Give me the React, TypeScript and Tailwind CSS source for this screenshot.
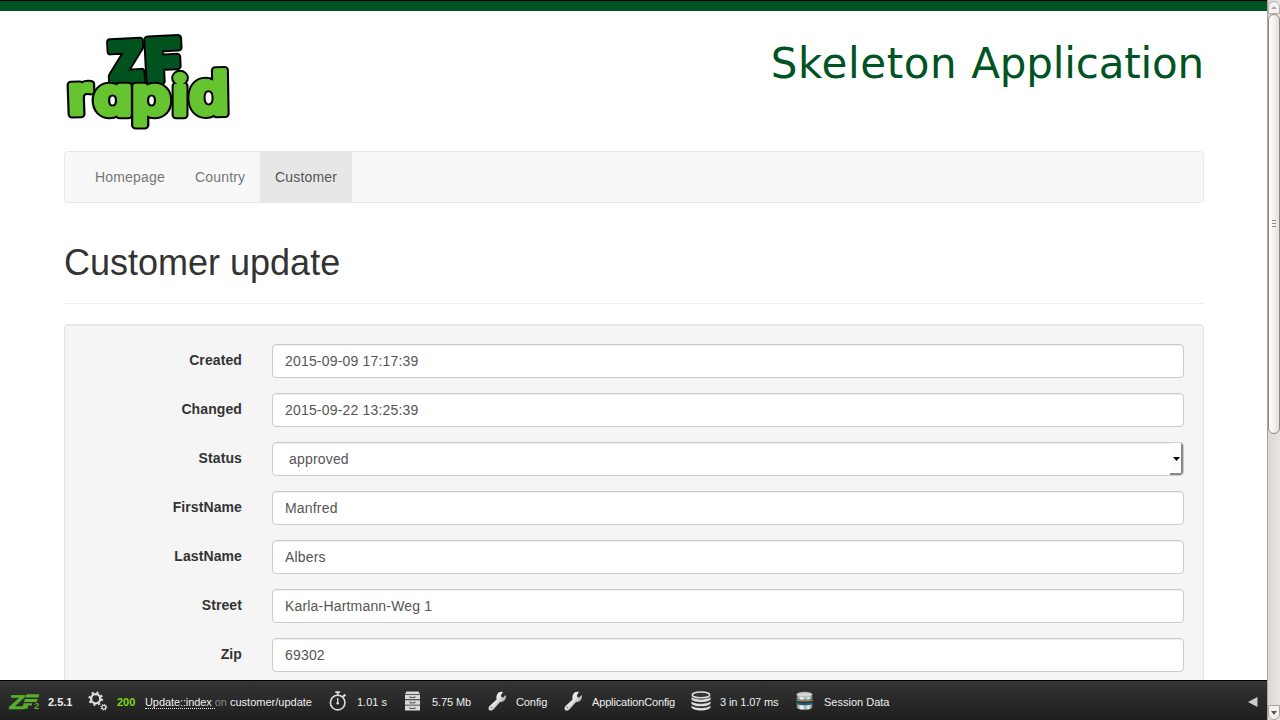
import type { ReactNode } from "react";

type LetterProps = { ch: string; x: number; y: number; size: number; sx: number; rot?: number; fill: string };

function Letters({ items }: { items: LetterProps[] }) {
  const draw = (l: LetterProps, stroke: string, width: number, key: string) => (
    <text
      key={key}
      transform={`translate(${l.x} ${l.y}) rotate(${l.rot ?? 0}) scale(${l.sx} 1)`}
      fontSize={l.size}
      fill={l.fill}
      stroke={stroke}
      strokeWidth={width}
      strokeLinejoin="round"
    >
      {l.ch}
    </text>
  );
  return (
    <>
      {items.map((l) => (
        <g key={l.ch}>
          {draw(l, "#000", 8.4, "outline")}
          {draw(l, l.fill, 4.4, "body")}
        </g>
      ))}
    </>
  );
}

function Logo() {
  const dark = "#00521f";
  const light = "#66c430";
  return (
    <svg
      width="170"
      height="100"
      viewBox="64 31 170 100"
      className="block overflow-visible font-['Inter',sans-serif] [font-feature-settings:'cv11']"
    >
      <g className="font-black">
        <Letters
          items={[
            { ch: "Z", x: 109.5, y: 82.5, size: 55, sx: 0.92, rot: -3, fill: dark },
            { ch: "F", x: 147, y: 82, size: 58, sx: 1.02, rot: -3, fill: dark },
          ]}
        />
      </g>
      <g className="font-bold">
        <Letters
          items={[
            { ch: "r", x: 68.5, y: 114.5, size: 54, sx: 1.1, rot: -2, fill: light },
            { ch: "a", x: 94, y: 114.5, size: 53, sx: 1.14, fill: light },
            { ch: "p", x: 132, y: 114.5, size: 53, sx: 1.14, fill: light },
            { ch: "i", x: 172.5, y: 114.5, size: 53, sx: 1.05, fill: light },
            { ch: "d", x: 189.5, y: 114.500, size: 60, sx: 1.05, rot: -1, fill: light },
          ]}
        />
      </g>
    </svg>
  );
}

const fields = [
  ["Created", "2015-09-09 17:17:39"],
  ["Changed", "2015-09-22 13:25:39"],
  ["Status", "approved"],
  ["FirstName", "Manfred"],
  ["LastName", "Albers"],
  ["Street", "Karla-Hartmann-Weg 1"],
  ["Zip", "69302"],
];

function Field({ label, value }: { label: string; value: string }) {
  const select = label === "Status";
  return (
    <div className="flex h-[34px] shrink-0">
      <div className="w-[158px] pt-[6px] text-right font-bold leading-5 tracking-[0.1px] text-[#333]">{label}</div>
      <div className="ml-[30px] flex flex-1 items-center justify-between overflow-hidden rounded-[4px] border border-[#ccc] bg-white pl-3 tracking-[0.18px] text-[#555] shadow-[inset_0_1px_1px_rgba(0,0,0,0.075)]">
        <span className={select ? "pl-1" : ""}>{value}</span>
        {select && (
          <span className="flex h-[32px] w-[13px] items-center justify-center rounded-br-[3px] border-b-2 border-r-2 border-[#888] bg-[#fcfcfa] pl-px pt-px">
            <svg width="7" height="4" viewBox="0 0 7 4"><path d="M0 0h7L3.5 4z" fill="#000" /></svg>
          </span>
        )}
      </div>
    </div>
  );
}

function ZfMark() {
  return (
    <svg width="33" height="18" viewBox="0 0 33 18" className="overflow-visible font-['Liberation_Sans',sans-serif] font-bold">
      <text transform="translate(0.6 16.6) skewX(-6) scale(1.3 1)" fontSize="20" fill="#59ae2c" stroke="#59ae2c" strokeWidth="0.6">Z</text>
      <path d="M18.500 2.300h12.800l-.8 3.300H17.200zM17 6.900h12.600l-.8 3.200H15.900zM15.600 11.300h8.700l-.6 2.200h-3.500l-.8 3.200h-5.200z" fill="#59ae2c" />
      <text x="26" y="17.200" fontSize="9.500" fill="#59ae2c">2</text>
    </svg>
  );
}

function Gears() {
  return (
    <svg width="20" height="20" viewBox="0 0 20 20" fill="none" stroke="#ddd">
      <circle cx="7.7" cy="7.8" r="4.6" strokeWidth="2.3" />
      <circle cx="7.7" cy="7.8" r="6.3" strokeWidth="2" strokeDasharray="2.2 2.748" />
      <circle cx="15.8" cy="16.2" r="1.9" strokeWidth="1.2" />
      <circle cx="15.8" cy="16.2" r="2.9" strokeWidth="1.1" strokeDasharray="1.1 1.177" />
    </svg>
  );
}

function Stopwatch() {
  return (
    <svg width="18" height="20" viewBox="0 0 18 20" fill="none" stroke="#ddd">
      <circle cx="8.7" cy="11.6" r="7.3" strokeWidth="1.6" />
      <path d="M6.3 1.2h4.8M8.7 1.5v3" strokeWidth="1.8" />
      <path d="M14 5.6l2.5-2" strokeWidth="2" />
      <path d="M8.7 7v5" strokeWidth="1.3" />
      <circle cx="8.7" cy="12.2" r="1.3" fill="#ddd" stroke="none" />
    </svg>
  );
}

function Cabinet() {
  return (
    <svg width="17" height="20" viewBox="0 0 17 20">
      <path d="M2.5.5h12L16 3H1zM1 3.8h15v4.5H1zM1 9.2h15v4.5H1zM1 14.6h15v4.9H1z" fill="#d9d9d9" />
      <path d="M6 5.200v1.300h5V5.200M6 10.600v1.300h5v-1.300M6 16.200v1.300h5v-1.300" fill="none" stroke="#444" strokeWidth="0.9" />
    </svg>
  );
}

function Wrench() {
  return (
    <svg width="19" height="20" viewBox="0 0 19 20">
      <defs>
        <linearGradient id="steel" x1="0" y1="0" x2="1" y2="1">
          <stop offset="0" stopColor="#fff" />
          <stop offset="0.5" stopColor="#e3e3e3" />
          <stop offset="0.75" stopColor="#999" />
        </linearGradient>
      </defs>
      <path
        d="M11 1.300C12.300.6 13.800.6 15 1.100L12.900 4.300l.5 1.900 1.900.4 2.300-2.700c.7 2.300.1 4.600-1.500 5.900-1.300 1.100-2.700 1.400-4 1.100l-6.700 7.700c-1.200 1.300-3 1.500-4.200.400-1.100-1.200-.8-3 .4-4.100l7-6.400C7.900 5.700 9 2.700 11 1.300z"
        fill="url(#steel)"
      />
      <circle cx="3.300" cy="16.500" r=".9" fill="#888" />
    </svg>
  );
}

function Database() {
  return (
    <svg width="20" height="20" viewBox="0 0 20 20">
      <ellipse cx="10" cy="3.9" rx="8.7" ry="2.9" fill="#333" stroke="#ddd" strokeWidth="1.6" />
      <path
        d="M.5 6c2 3.300 17 3.300 19 0v2.600c-2 3.400-17 3.400-19 0zM.5 10.300c2 3.300 17 3.300 19 0v2.400c-2 3.400-17 3.400-19 0zM.5 14.400c2 3.300 17 3.300 19 0v2.200c-2 4-17 4-19 0z"
        fill="#ddd"
      />
    </svg>
  );
}

function Session() {
  return (
    <svg width="17" height="20" viewBox="0 0 17 20">
      <defs>
        <linearGradient id="drum" x1="0" x2="1" y1="0" y2="0">
          <stop offset="0" stopColor="#777" />
          <stop offset=".3" stopColor="#fff" />
          <stop offset=".55" stopColor="#aaa" />
          <stop offset=".75" stopColor="#eee" />
          <stop offset="1" stopColor="#777" />
        </linearGradient>
      </defs>
      <path d="M.7 3.500v13c1 3 14.600 3 15.600 0v-13z" fill="url(#drum)" />
      <ellipse cx="8.500" cy="3.500" rx="7.800" ry="2.400" fill="#d4d4d4" stroke="#999" strokeWidth=".5" />
      <path d="M.5 7.200c3 2 13 2 16 0v5.600c-3 2-13 2-16 0z" fill="#17657d" />
      <path d="M.5 8.800c3 1.600 13 1.600 16 0" fill="none" stroke="#c98a3c" strokeWidth="1.100" />
      <path d="M.5 10.300c3 1.600 13 1.600 16 0" fill="none" stroke="#333" strokeWidth="1.300" />
    </svg>
  );
}

function Tool({ icon, width, gap, children }: { icon: ReactNode; width: string; gap: string; children: ReactNode }) {
  return (
    <div className={`flex h-full shrink-0 items-center whitespace-nowrap ${width}`}>
      <span className={`shrink-0 ${gap}`}>{icon}</span>
      <span className="pt-[3px]">{children}</span>
    </div>
  );
}

function DebugBar() {
  return (
    <div className="flex h-10 shrink-0 items-center border-t border-black bg-linear-to-b from-[#343434] to-[#1f1f1f] pl-2 font-['Liberation_Sans',Arial,sans-serif] text-[11px] leading-[14px] text-[#eee]">
      <Tool icon={<ZfMark />} width="w-[80px]" gap="w-[40px]"><b>2.5.1</b></Tool>
      <Tool icon={<Gears />} width="w-[241px]" gap="w-[29px]">
        <b className="inline-block w-[28px] text-[#7fdb12]">200</b>
        <span className="border-b border-dotted border-[#eee] tracking-[-0.09px]">Update::index </span>
        <span className="text-[#888]">on</span> customer/update
      </Tool>
      <Tool icon={<Stopwatch />} width="w-[75px]" gap="w-[28px]">1.01 s</Tool>
      <Tool icon={<Cabinet />} width="w-[84px]" gap="w-[28px]"><span className="tracking-[-0.1px]">5.75 Mb</span></Tool>
      <Tool icon={<Wrench />} width="w-[76px]" gap="w-[28px]"><span className="tracking-[-0.1px]">Config</span></Tool>
      <Tool icon={<Wrench />} width="w-[127px]" gap="w-[28px]"><span className="tracking-[-0.15px]">ApplicationConfig</span></Tool>
      <Tool icon={<Database />} width="w-[105px]" gap="w-[29px]"><span className="tracking-[-0.12px]">3 in 1.07 ms</span></Tool>
      <Tool icon={<Session />} width="w-[120px]" gap="w-[28px]">Session Data</Tool>
      <svg width="10" height="10" viewBox="0 0 10 10" className="ml-auto mr-[9px] mt-[3px]"><path d="M0 5l9.500-5v10z" fill="#ccc" /></svg>
    </div>
  );
}

function Scrollbar() {
  return (
    <div className="flex h-full w-[13px] shrink-0 flex-col border-l border-[#aaa39e] bg-linear-to-r from-[#ddd6d1] to-[#eae4e1] pt-px">
      <div className="flex h-[13px] items-center justify-center rounded-t-[6px] border border-[#b5aea9] bg-[#f5f3f2]">
        <svg width="6" height="3" viewBox="0 0 6 3"><path d="M0 3h6L3 0z" fill="#aaa" /></svg>
      </div>
      <div className="flex h-[420px] flex-col items-center justify-center gap-[2px] rounded-[6px] border border-[#91877f] bg-linear-to-r from-white via-[#f3f1f0] to-[#e5e0dc] pb-[2px]">
        <i className="h-px w-[4px] bg-[#8b8b8b]" />
        <i className="h-px w-[4px] bg-[#8b8b8b]" />
        <i className="h-px w-[4px] bg-[#8b8b8b]" />
      </div>
      <div className="mt-auto flex h-[15px] items-center justify-center rounded-b-[6px] border border-[#aaa39e] bg-[#f3f1ef]">
        <svg width="6" height="4" viewBox="0 0 6 4"><path d="M0 0h6L3 4z" fill="#555" /></svg>
      </div>
    </div>
  );
}

export default function App() {
  return (
    <div className="flex h-screen w-[1280px] overflow-hidden bg-white font-['Liberation_Sans',Arial,sans-serif] text-[14px] leading-5">
      <div className="flex min-w-0 flex-1 flex-col">
        <div className="h-[11px] shrink-0 border-t border-black bg-[#005322]" />
        <main className="flex min-h-0 flex-1 flex-col overflow-hidden pl-16 pr-[63px]">
          <header className="flex h-[140px] shrink-0 justify-between pt-5">
            <Logo />
            <div className="pt-[8px] font-['DejaVu_Sans',Verdana,sans-serif] text-[42px] leading-[50px] text-[#005322]">
              <span className="tracking-[0.6px]">Skeleton </span>
              <span className="tracking-[-0.17px]">Application</span>
            </div>
          </header>
          <nav className="flex h-[52px] shrink-0 rounded-[4px] border border-[#e7e7e7] bg-[#f8f8f8] pl-[15px] tracking-[0.17px] text-[#777]">
            <a className="w-[100px] px-[15px] py-[15px]">Homepage</a>
            <a className="w-20 px-[15px] py-[15px]">Country</a>
            <a className="w-[92px] bg-[#e7e7e7] px-[15px] py-[15px] text-[#555]">Customer</a>
          </nav>
          <h1 className="mt-10 h-[61px] shrink-0 border-b border-[#eee] text-[36px] leading-[40px] text-[#333]">Customer update</h1>
          <section className="mt-5 flex h-[500px] shrink-0 flex-col gap-[15px] rounded-[4px] border border-[#e3e3e3] bg-[#f5f5f5] p-[19px] shadow-[inset_0_1px_1px_rgba(0,0,0,0.05)]">
            {fields.map(([label, value]) => (
              <Field key={label} label={label} value={value} />
            ))}
          </section>
        </main>
        <DebugBar />
      </div>
      <Scrollbar />
    </div>
  );
}
